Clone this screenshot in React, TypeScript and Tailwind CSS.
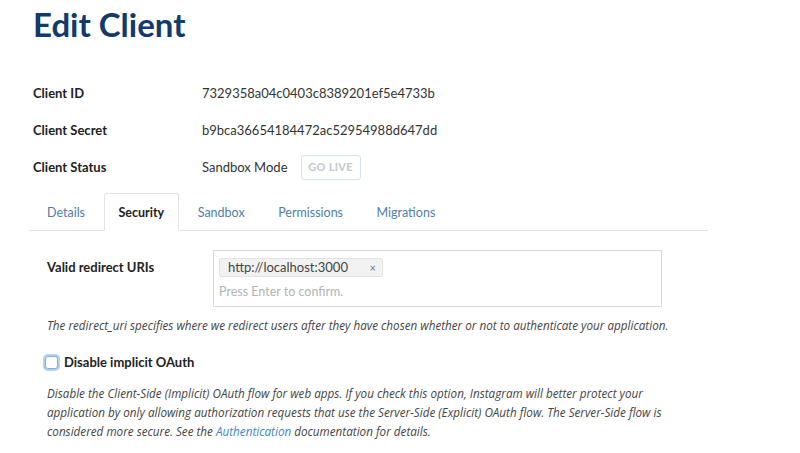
import React, { useState } from 'react';

const tabs = ['Details', 'Security', 'Sandbox', 'Permissions', 'Migrations'];

const EditClient: React.FC = () => {
  const [activeTab, setActiveTab] = useState('Security');
  const [uris, setUris] = useState<string[]>(['http://localhost:3000']);
  const [implicitOff, setImplicitOff] = useState(false);

  return (
    <div className="min-h-screen bg-white text-[#222] font-['Lato',sans-serif] overflow-hidden">
      <div className="pl-[33px] pt-[4px]">
        <h1 className="text-[33px] leading-[40px] font-bold text-[#123b6b]">Edit Client</h1>

        {/* Client info */}
        <div className="mt-[31px] text-[13px]">
          <div className="flex items-center h-[37px]">
            <div className="w-[169px] font-bold">Client ID</div>
            <div className="text-[#333]">7329358a04c0403c8389201ef5e4733b</div>
          </div>
          <div className="flex items-center h-[37px]">
            <div className="w-[169px] font-bold">Client Secret</div>
            <div className="text-[#333]">b9bca36654184472ac52954988d647dd</div>
          </div>
          <div className="flex items-center h-[37px]">
            <div className="w-[169px] font-bold">Client Status</div>
            <div className="text-[#333]">Sandbox Mode</div>
            <button className="ml-[13px] h-[25px] w-[60px] rounded-[3px] border border-[#d5e1ec] text-[11px] font-bold text-[#c4c8cc] tracking-[0.3px]">
              GO LIVE
            </button>
          </div>
        </div>
      </div>

      {/* Tabs */}
      <div className="ml-[30px] w-[678px] mt-[7px] flex border-b border-[#e3e3e3] pl-[2px] text-[12.5px]">
        {tabs.map(tab => (
          <button
            key={tab}
            onClick={() => setActiveTab(tab)}
            className={`h-[38px] pt-[2px] px-[14px] mr-[3.5px] -mb-px rounded-t-[3px] border ${
              activeTab === tab
                ? 'border-[#e3e3e3] border-b-white bg-white text-[#222] font-bold'
                : 'border-transparent text-[#4f7ea6]'
            }`}
          >
            {tab}
          </button>
        ))}
      </div>

      {/* Security tab */}
      <div className="pl-[47px] pt-[19px]">
        <div className="flex">
          <div className="w-[166px] pt-[8px] text-[13px] font-bold">Valid redirect URIs</div>
          <div className="w-[449px] h-[57px] border border-[#d9d9d9] px-[5px] pt-[7px]">
            <div className="flex">
              {uris.map(uri => (
                <span
                  key={uri}
                  className="flex items-center h-[19px] w-[164px] rounded-[2px] border border-[#e2e2e2] bg-[#f2f2f2] pl-[8px] pr-[6px] text-[13px] text-[#444]"
                >
                  <span className="flex-1">{uri}</span>
                  <button
                    onClick={() => setUris(uris.filter(u => u !== uri))}
                    className="text-[11px] text-[#5a7fa3] leading-none"
                  >
                    ×
                  </button>
                </span>
              ))}
            </div>
            <input
              placeholder="Press Enter to confirm."
              className="mt-[6px] w-full text-[12.5px] text-[#444] placeholder-[#b3b3b3] outline-none"
              onKeyDown={e => {
                const v = (e.target as HTMLInputElement).value.trim();
                if (e.key === 'Enter' && v) {
                  setUris([...uris, v]);
                  (e.target as HTMLInputElement).value = '';
                }
              }}
            />
          </div>
        </div>

        <p className="mt-[10px] text-[11.7px] italic text-[#444] font-['Open_Sans',sans-serif] whitespace-nowrap">
          The redirect_uri specifies where we redirect users after they have chosen whether or not to authenticate your application.
        </p>

        <label className="mt-[18px] flex items-center -ml-[2px] cursor-pointer">
          <span
            onClick={() => setImplicitOff(!implicitOff)}
            className={`w-[13px] h-[13px] rounded-[3px] border border-[#7eaee0] shadow-[0_0_0_2px_#b3d1f2] ${
              implicitOff ? 'bg-[#4a90d9]' : 'bg-white'
            }`}
          />
          <span className="ml-[6px] text-[13px] font-bold">Disable implicit OAuth</span>
        </label>

        <p className="mt-[12px] text-[11.7px] leading-[19px] italic text-[#444] font-['Open_Sans',sans-serif] whitespace-nowrap">
          Disable the Client-Side (Implicit) OAuth flow for web apps. If you check this option, Instagram will better protect your
          <br />
          application by only allowing authorization requests that use the Server-Side (Explicit) OAuth flow. The Server-Side flow is
          <br />
          considered more secure. See the <a className="text-[#3d86c6]">Authentication</a> documentation for details.
        </p>
      </div>
    </div>
  );
};

export default EditClient;
